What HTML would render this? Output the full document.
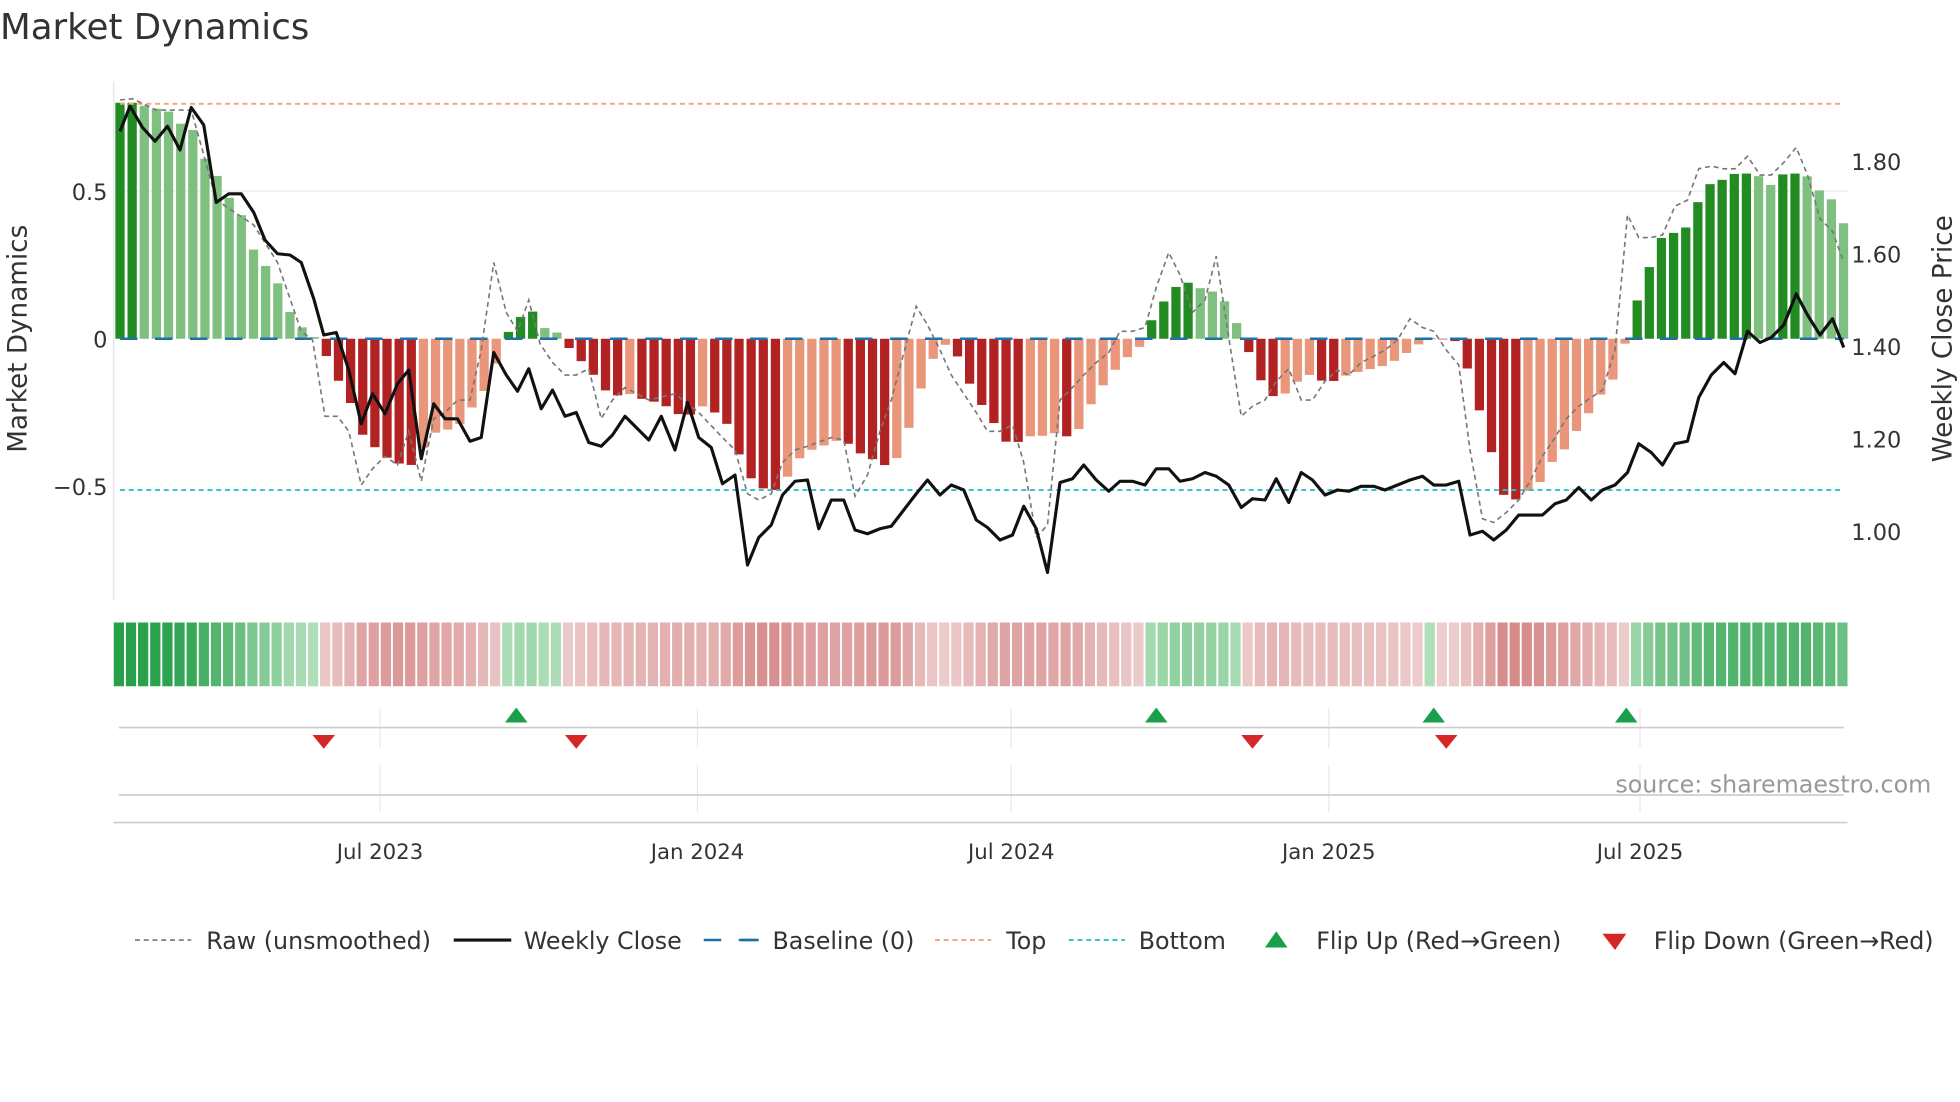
<!DOCTYPE html>
<html><head><meta charset="utf-8">
<style>
html,body{margin:0;padding:0;background:#fff;}
svg{display:block;font-family:"DejaVu Sans","Liberation Sans",sans-serif;}
</style></head>
<body>
<svg id="s" width="1960" height="1102" viewBox="0 0 1568 881.6" xmlns="http://www.w3.org/2000/svg">
<rect width="1568" height="882" fill="#fff"/>
<text x="0" y="31" font-size="28.5" fill="#333">Market Dynamics</text>
<line x1="91" y1="153" x2="1478" y2="153" stroke="#eceef2" stroke-width="1.2"/>
<line x1="91" y1="65" x2="91" y2="480" stroke="#e6e8ec" stroke-width="1.2"/>
<g id="bars"></g>
<line x1="96" y1="83" x2="1475" y2="83" stroke="#f4a470" stroke-width="1.5" stroke-dasharray="4,3"/>
<line x1="96" y1="392" x2="1475" y2="392" stroke="#2bc0d0" stroke-width="1.5" stroke-dasharray="4,3"/>
<line x1="96" y1="271" x2="1475" y2="271" stroke="#2070a8" stroke-width="2" stroke-dasharray="14,14"/>
<polyline id="raw" fill="none" stroke="#777" stroke-width="1.3" stroke-dasharray="4,3"/>
<polyline id="close" fill="none" stroke="#111" stroke-width="2.5" stroke-linejoin="round"/>
<g font-size="18" fill="#333">
<text x="86" y="160" text-anchor="end">0.5</text>
<text x="86" y="278" text-anchor="end">0</text>
<text x="86" y="396" text-anchor="end">−0.5</text>
<text x="1481" y="136">1.80</text>
<text x="1481" y="210">1.60</text>
<text x="1481" y="284">1.40</text>
<text x="1481" y="358">1.20</text>
<text x="1481" y="432">1.00</text>
</g>
<text transform="translate(21,271) rotate(-90)" font-size="21" fill="#333" text-anchor="middle">Market Dynamics</text>
<text transform="translate(1561,271) rotate(-90)" font-size="21" fill="#333" text-anchor="middle">Weekly Close Price</text>
<g id="heat"></g>
<g stroke="#e8e8e8" stroke-width="1">
<line x1="304" y1="567" x2="304" y2="598"/><line x1="558" y1="567" x2="558" y2="598"/>
<line x1="809" y1="567" x2="809" y2="598"/><line x1="1063" y1="567" x2="1063" y2="598"/>
<line x1="1312" y1="567" x2="1312" y2="598"/>
<line x1="304" y1="612" x2="304" y2="650"/><line x1="558" y1="612" x2="558" y2="650"/>
<line x1="809" y1="612" x2="809" y2="650"/><line x1="1063" y1="612" x2="1063" y2="650"/>
<line x1="1312" y1="612" x2="1312" y2="650"/>
</g>
<line x1="95" y1="582" x2="1475" y2="582" stroke="#ccc" stroke-width="1.3"/>
<line x1="95" y1="636" x2="1475" y2="636" stroke="#ccc" stroke-width="1.3"/>
<line x1="91" y1="658" x2="1478" y2="658" stroke="#ccc" stroke-width="1.3"/>
<g id="flips"></g>
<text x="1545" y="634" font-size="19" fill="#999" text-anchor="end">source: sharemaestro.com</text>
<g font-size="17" fill="#333" text-anchor="middle">
<text x="304" y="687">Jul 2023</text><text x="558" y="687">Jan 2024</text>
<text x="809" y="687">Jul 2024</text><text x="1063" y="687">Jan 2025</text>
<text x="1312" y="687">Jul 2025</text>
</g>
<g font-size="19" fill="#333">
<line x1="108" y1="752" x2="153" y2="752" stroke="#777" stroke-width="1.3" stroke-dasharray="4,3"/>
<text x="165" y="759">Raw (unsmoothed)</text>
<line x1="363" y1="752" x2="409" y2="752" stroke="#111" stroke-width="2.5"/>
<text x="419" y="759">Weekly Close</text>
<line x1="563" y1="752" x2="607" y2="752" stroke="#2070a8" stroke-width="2" stroke-dasharray="14,14"/>
<line x1="593" y1="752" x2="607" y2="752" stroke="#2070a8" stroke-width="2"/>
<text x="618" y="759">Baseline (0)</text>
<line x1="748" y1="752" x2="793" y2="752" stroke="#f4a470" stroke-width="1.5" stroke-dasharray="4,3"/>
<text x="805" y="759">Top</text>
<line x1="855" y1="752" x2="900" y2="752" stroke="#2bc0d0" stroke-width="1.5" stroke-dasharray="4,3"/>
<text x="911" y="759">Bottom</text>
<polygon points="1012,758 1021,745 1030,758" fill="#1a9f4a"/>
<text x="1053" y="759">Flip Up (Red→Green)</text>
<polygon points="1282,747 1292,760 1301,747" fill="#d62728"/>
<text x="1323" y="759">Flip Down (Green→Red)</text>
</g>
</svg>
<script>
var NS="http://www.w3.org/2000/svg";
function interp(pts,x){for(var i=0;i<pts.length-1;i++){if(x>=pts[i][0]&&x<=pts[i+1][0]){var t=(x-pts[i][0])/(pts[i+1][0]-pts[i][0]);return pts[i][1]+t*(pts[i+1][1]-pts[i][1]);}}return x<pts[0][0]?pts[0][1]:pts[pts.length-1][1];}
var bk=[[96,0.8],[106,0.8],[115,0.79],[125,0.78],[135,0.77],[144,0.73],[154,0.71],[164,0.61],[174,0.55],[183,0.48],[193,0.42],[203,0.3],[212,0.25],[222,0.19],[232,0.09],[241,0.04],[251,0.02],[252,-0.02],[259,-0.04],[269,-0.13],[279,-0.2],[289,-0.32],[298,-0.36],[308,-0.4],[318,-0.42],[327,-0.44],[337,-0.38],[347,-0.32],[356,-0.31],[366,-0.3],[376,-0.24],[385,-0.2],[395,-0.1],[405,-0.02],[406,0.02],[413,0.05],[423,0.12],[432,0.04],[442,0.03],[452,0.005],[453,-0.02],[461,-0.06],[471,-0.1],[481,-0.16],[490,-0.2],[500,-0.18],[510,-0.2],[520,-0.21],[530,-0.22],[540,-0.25],[550,-0.27],[559,-0.22],[569,-0.25],[578,-0.25],[588,-0.36],[598,-0.46],[607,-0.5],[617,-0.52],[626,-0.5],[636,-0.42],[646,-0.38],[655,-0.37],[665,-0.35],[675,-0.34],[684,-0.38],[694,-0.4],[704,-0.42],[713,-0.44],[723,-0.36],[733,-0.22],[742,-0.1],[752,-0.03],[761,-0.01],[771,-0.11],[781,-0.2],[790,-0.25],[800,-0.32],[810,-0.38],[819,-0.32],[829,-0.34],[838,-0.32],[848,-0.32],[858,-0.34],[867,-0.28],[877,-0.18],[887,-0.14],[896,-0.08],[906,-0.05],[916,-0.01],[917,0.03],[925,0.09],[935,0.15],[944,0.19],[954,0.19],[964,0.16],[973,0.16],[983,0.11],[993,0.02],[994,-0.02],[1002,-0.06],[1012,-0.18],[1021,-0.2],[1031,-0.18],[1041,-0.13],[1050,-0.12],[1060,-0.15],[1070,-0.14],[1079,-0.12],[1089,-0.11],[1099,-0.1],[1108,-0.09],[1118,-0.07],[1128,-0.04],[1138,-0.01],[1147,0.005],[1157,-0.003],[1167,-0.01],[1176,-0.13],[1186,-0.28],[1195,-0.41],[1205,-0.56],[1215,-0.54],[1224,-0.51],[1234,-0.48],[1244,-0.4],[1253,-0.37],[1263,-0.3],[1273,-0.24],[1282,-0.18],[1292,-0.13],[1301,-0.003],[1302,0.005],[1311,0.15],[1321,0.26],[1330,0.35],[1340,0.36],[1350,0.38],[1359,0.47],[1369,0.53],[1379,0.54],[1388,0.56],[1398,0.56],[1408,0.55],[1417,0.52],[1427,0.56],[1437,0.56],[1446,0.55],[1456,0.5],[1466,0.47],[1475,0.39]];
var bars=document.getElementById("bars"),heat=document.getElementById("heat");
var prev=0;
for(var i=0;i<143;i++){
 var x=96+i*9.71,v=interp(bk,x);
 var dark=Math.abs(v)>=Math.abs(prev)-0.001; if(i==0)dark=true;
 if((v>0)!=(prev>0))dark=true;
 prev=v;
 var col=v>=0?(dark?"#228b22":"#7fbf7f"):(dark?"#b22222":"#e9967a");
 var h=Math.abs(v)*236,y=v>=0?271-h:271;
 var r=document.createElementNS(NS,"rect");
 r.setAttribute("x",x-3.7);r.setAttribute("width",7.4);r.setAttribute("y",y);r.setAttribute("height",Math.max(h,0.5));r.setAttribute("fill",col);bars.appendChild(r);
 var m,a,b;
 if(v>=0){m=Math.min(Math.abs(v)/0.8,1);a=[200,234,205];b=[40,160,75];}else{m=Math.min(Math.abs(v)/0.7,1);a=[242,220,220];b=[208,120,120];}
 var c="rgb("+[0,1,2].map(function(k){return Math.round(a[k]+(b[k]-a[k])*(0.15+0.85*m));}).join(",")+")";
 var q=document.createElementNS(NS,"rect");
 q.setAttribute("x",91+i*9.71);q.setAttribute("width",8.2);q.setAttribute("y",498);q.setAttribute("height",51);q.setAttribute("fill",c);heat.appendChild(q);
}
var cl=[[96,105],[104,85],[114,102],[124,113],[134,101],[144,120],[153,86],[163,100],[173,162],[183,155],[193,155],[203,170],[212,192],[222,203],[232,204],[241,210],[251,239],[259,268],[269,266],[279,296],[289,339],[298,315],[308,331],[318,307],[327,296],[337,367],[347,323],[356,335],[366,335],[376,353],[385,350],[395,282],[405,300],[414,313],[423,295],[433,327],[442,312],[452,333],[461,330],[471,354],[481,357],[490,348],[500,333],[510,343],[519,352],[529,333],[540,360],[550,322],[559,350],[569,358],[578,387],[588,380],[598,452],[607,430],[617,420],[626,396],[636,385],[646,384],[655,423],[665,400],[675,400],[684,424],[694,427],[704,423],[713,421],[723,408],[733,395],[742,384],[752,396],[761,388],[771,392],[781,416],[790,422],[800,432],[810,428],[819,405],[829,423],[838,458],[848,386],[858,383],[867,372],[877,384],[887,393],[896,385],[906,385],[916,388],[925,375],[935,375],[944,385],[954,383],[964,378],[973,381],[983,388],[993,406],[1002,399],[1012,400],[1021,383],[1031,402],[1041,378],[1050,384],[1060,396],[1070,392],[1079,393],[1089,389],[1099,389],[1108,392],[1118,388],[1128,384],[1138,381],[1147,388],[1157,388],[1167,385],[1176,428],[1186,425],[1195,432],[1205,424],[1215,412],[1224,412],[1234,412],[1244,403],[1253,400],[1263,390],[1273,400],[1282,392],[1292,388],[1302,378],[1311,355],[1321,362],[1330,372],[1340,355],[1350,353],[1359,318],[1369,300],[1379,290],[1388,299],[1398,265],[1408,274],[1417,270],[1427,260],[1437,235],[1446,252],[1456,268],[1466,255],[1475,278]];
document.getElementById("close").setAttribute("points",cl.map(function(p){return p.join(",")}).join(" "));
var rw=[[96,80],[106,79],[125,88],[153,88],[173,160],[203,180],[222,210],[241,265],[250,272],[260,333],[270,333],[279,345],[289,388],[298,375],[308,365],[318,372],[327,345],[337,385],[347,335],[356,330],[366,320],[376,320],[385,280],[395,210],[405,250],[414,265],[423,240],[432,275],[442,290],[452,300],[461,300],[471,295],[481,335],[490,320],[500,310],[519,320],[540,315],[559,330],[578,350],[588,360],[598,395],[607,400],[617,395],[626,370],[636,360],[646,357],[665,350],[675,352],[684,397],[694,380],[704,345],[713,320],[733,245],[742,260],[752,280],[761,300],[771,315],[781,330],[790,345],[800,345],[810,340],[819,370],[829,430],[838,420],[848,320],[858,310],[867,300],[877,290],[887,282],[896,265],[906,265],[916,262],[925,230],[935,202],[944,220],[954,250],[964,240],[973,205],[983,270],[993,333],[1002,325],[1012,320],[1021,305],[1031,295],[1041,320],[1050,320],[1060,305],[1070,296],[1079,300],[1089,290],[1099,285],[1108,280],[1118,272],[1128,255],[1138,262],[1147,265],[1157,280],[1167,292],[1176,360],[1186,415],[1195,418],[1205,410],[1215,400],[1224,385],[1234,365],[1244,350],[1253,335],[1263,325],[1273,318],[1282,312],[1292,280],[1302,172],[1311,190],[1321,190],[1330,188],[1340,165],[1350,160],[1359,135],[1369,133],[1379,135],[1388,135],[1398,125],[1408,140],[1417,140],[1427,130],[1437,118],[1446,140],[1456,175],[1466,185],[1475,210]];
document.getElementById("raw").setAttribute("points",rw.map(function(p){return p.join(",")}).join(" "));
var fl=document.getElementById("flips");
[413,925,1147,1301].forEach(function(x){var p=document.createElementNS(NS,"polygon");p.setAttribute("points",(x-9)+",578 "+x+",566 "+(x+9)+",578");p.setAttribute("fill","#1a9f4a");fl.appendChild(p);});
[259,461,1002,1157].forEach(function(x){var p=document.createElementNS(NS,"polygon");p.setAttribute("points",(x-9)+",588 "+x+",599 "+(x+9)+",588");p.setAttribute("fill","#d62728");fl.appendChild(p);});
</script>
</body></html>
